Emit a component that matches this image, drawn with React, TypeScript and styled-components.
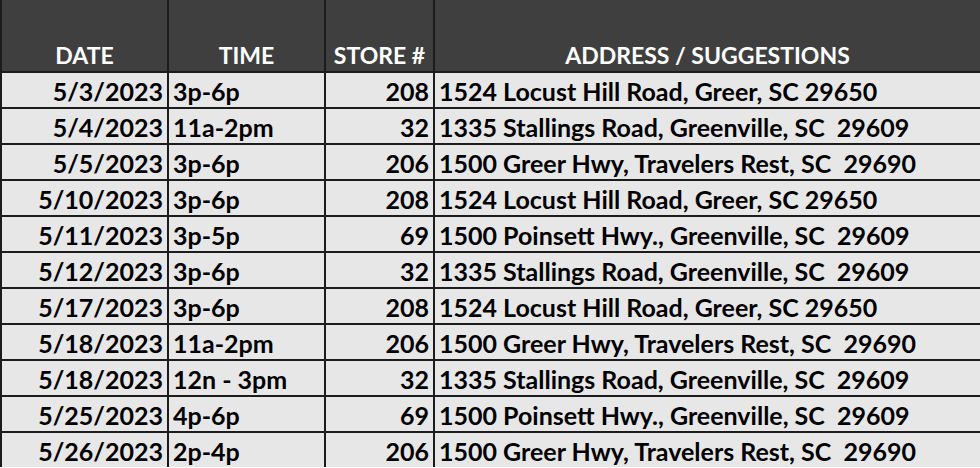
import React from "react";
import styled, { createGlobalStyle } from "styled-components";

const Global = createGlobalStyle`
  html, body { margin: 0; padding: 0; background: #ffffff; }
  body { font-family: Lato, "Open Sans", sans-serif; overflow: hidden; }
`;

const Sheet = styled.div`
  display: grid;
  grid-template-columns: 165px 155px 107px 1fr;
  grid-auto-rows: 34px;
  grid-template-rows: 71px;
  gap: 2px;
  padding-left: 2px;
  background: #1c1c1c;
  width: 980px;
  box-sizing: border-box;
  font-family: Lato, "Open Sans", sans-serif;
  font-weight: 700;
  font-size: 25px;
`;

const HeaderCell = styled.div`
  background: #3f3f3f;
  color: #ffffff;
  display: flex;
  align-items: flex-end;
  justify-content: center;
  padding-bottom: 4px;
  line-height: 1;
  font-size: 23px;
  white-space: pre;
`;

const Cell = styled.div<{ $align: "left" | "right" }>`
  background: #e7e7e7;
  color: #000000;
  display: flex;
  align-items: center;
  justify-content: ${(p) => (p.$align === "right" ? "flex-end" : "flex-start")};
  padding: ${(p) => (p.$align === "right" ? "2px 4px 0 0" : "2px 0 0 4px")};
  line-height: 1;
  white-space: pre;
  overflow: hidden;
`;

type Row = { date: string; time: string; store: string; address: string };

const rows: Row[] = [
  { date: "5/3/2023", time: "3p-6p", store: "208", address: "1524 Locust Hill Road, Greer, SC 29650" },
  { date: "5/4/2023", time: "11a-2pm", store: "32", address: "1335 Stallings Road, Greenville, SC  29609" },
  { date: "5/5/2023", time: "3p-6p", store: "206", address: "1500 Greer Hwy, Travelers Rest, SC  29690" },
  { date: "5/10/2023", time: "3p-6p", store: "208", address: "1524 Locust Hill Road, Greer, SC 29650" },
  { date: "5/11/2023", time: "3p-5p", store: "69", address: "1500 Poinsett Hwy., Greenville, SC  29609" },
  { date: "5/12/2023", time: "3p-6p", store: "32", address: "1335 Stallings Road, Greenville, SC  29609" },
  { date: "5/17/2023", time: "3p-6p", store: "208", address: "1524 Locust Hill Road, Greer, SC 29650" },
  { date: "5/18/2023", time: "11a-2pm", store: "206", address: "1500 Greer Hwy, Travelers Rest, SC  29690" },
  { date: "5/18/2023", time: "12n - 3pm", store: "32", address: "1335 Stallings Road, Greenville, SC  29609" },
  { date: "5/25/2023", time: "4p-6p", store: "69", address: "1500 Poinsett Hwy., Greenville, SC  29609" },
  { date: "5/26/2023", time: "2p-4p", store: "206", address: "1500 Greer Hwy, Travelers Rest, SC  29690" },
];

export default function App() {
  return (
    <>
      <Global />
      <Sheet>
        <HeaderCell>DATE</HeaderCell>
        <HeaderCell>TIME</HeaderCell>
        <HeaderCell>STORE #</HeaderCell>
        <HeaderCell>ADDRESS / SUGGESTIONS</HeaderCell>
        {rows.map((r, i) => (
          <React.Fragment key={i}>
            <Cell $align="right">{r.date}</Cell>
            <Cell $align="left">{r.time}</Cell>
            <Cell $align="right">{r.store}</Cell>
            <Cell $align="left">{r.address}</Cell>
          </React.Fragment>
        ))}
      </Sheet>
    </>
  );
}
